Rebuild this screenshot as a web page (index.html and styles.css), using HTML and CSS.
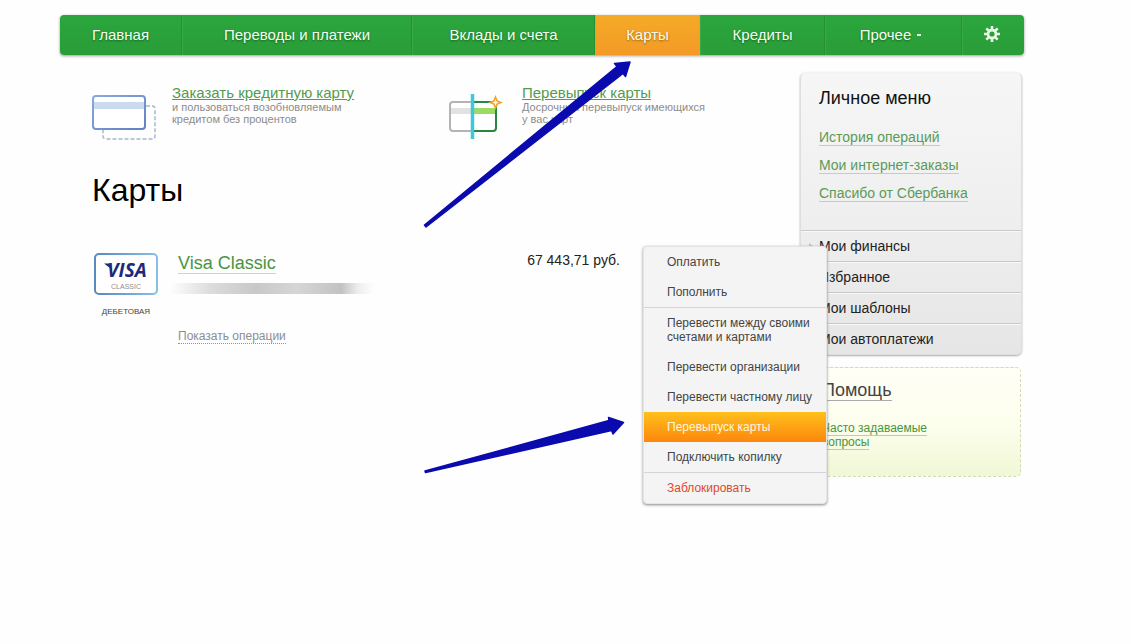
FILE: index.html
```
<!DOCTYPE html>
<html lang="ru">
<head>
<meta charset="utf-8">
<meta name="viewport" content="width=device-width, initial-scale=1">
<title>Карты</title>
<link rel="stylesheet" href="styles.css">
</head>
<body>
<div class="page">
  <nav class="nav" aria-label="Главное меню">
    <a class="nav-item nav-home" href="#">Главная</a>
    <a class="nav-item" href="#">Переводы и платежи</a>
    <a class="nav-item" href="#">Вклады и счета</a>
    <a class="nav-item nav-cards" href="#" aria-current="page">Карты</a>
    <a class="nav-item" href="#">Кредиты</a>
    <a class="nav-item nav-more" href="#">Прочее <span class="nav-dot"></span></a>
    <a class="nav-item nav-settings" href="#" aria-label="Настройки">
      <svg class="gear" viewBox="0 0 16 16" width="16" height="16" aria-hidden="true">
        <g stroke="#e8f7e6" stroke-width="2.6">
          <path d="M8 0v4M8 12v4M0 8h4M12 8h4M2.3 2.3l2.9 2.9M10.8 10.8l2.9 2.9M2.3 13.7l2.9-2.9M10.8 5.2l2.9-2.9"/>
        </g>
        <circle cx="8" cy="8" r="4" fill="none" stroke="#e8f7e6" stroke-width="2.8"/>
      </svg>
    </a>
  </nav>

  <div class="columns">
    <main class="main">
      <div class="promos">
        <section class="promo">
          <svg class="promo-icon promo-icon-order" viewBox="0 0 66 48" width="66" height="48" aria-hidden="true">
            <defs>
              <linearGradient id="edge" x1="0" y1="0" x2="1" y2="1">
                <stop offset="0" stop-color="#8aa9dc"/><stop offset="1" stop-color="#5f83bd"/>
              </linearGradient>
            </defs>
            <path d="M54 13h6q3 0 3 3v27q0 3-3 3H14q-3 0-3-3v-7" fill="none" stroke="#a9b7ca" stroke-width="1.5" stroke-dasharray="4 2"/>
            <rect x="1" y="3" width="52" height="33" rx="3" fill="#fff" stroke="url(#edge)" stroke-width="2"/>
            <path d="M2 9h50v7H2z" fill="#cbdaee"/>
          </svg>
          <div class="promo-text">
            <a class="promo-link" href="#">Заказать кредитную карту</a>
            <p class="promo-note">и пользоваться возобновляемым<br>кредитом без процентов</p>
          </div>
        </section>
        <section class="promo">
          <svg class="promo-icon promo-icon-reissue" viewBox="0 0 54 48" width="54" height="48" aria-hidden="true">
            <path d="M22 9H4Q1 9 1 12v23q0 3 3 3h18" fill="#fff" stroke="#b4b4b4" stroke-width="2"/>
            <path d="M2 15h20v6H2z" fill="#e2e2e2"/>
            <path d="M24 9h20q3 0 3 3v23q0 3-3 3H24" fill="#fff" stroke="#26873f" stroke-width="2"/>
            <path d="M25 15h21v6H25z" fill="#9cdb62"/>
            <path d="M23.500 1v45" stroke="#3ec8dc" stroke-width="3.500"/>
            <path d="M46.500 4l1.600 3.900 3.900 1.600-3.900 1.600-1.600 3.900-1.600-3.900-3.900-1.600 3.900-1.600z" fill="#fff4d2" stroke="#f0a12c" stroke-width="1.500"/>
          </svg>
          <div class="promo-text">
            <a class="promo-link" href="#">Перевыпуск карты</a>
            <p class="promo-note">Досрочный перевыпуск имеющихся<br>у вас карт</p>
          </div>
        </section>
      </div>

      <h1 class="title">Карты</h1>

      <section class="card-row">
        <div class="card-pic">
          <svg class="card-logo" viewBox="0 0 64 42" width="64" height="42" role="img" aria-label="Visa Classic">
            <defs>
              <linearGradient id="frame" x1="0" y1="0" x2="1" y2="0">
                <stop offset="0" stop-color="#5988bd"/><stop offset="1" stop-color="#86bfe6"/>
              </linearGradient>
            </defs>
            <rect x="1" y="1" width="62" height="40" rx="4" fill="#fff" stroke="url(#frame)" stroke-width="2"/>
            <text class="visa-word" x="33" y="24" text-anchor="middle">VISA</text>
            <path d="M10 10.500h5l3 6z" fill="#1a2a7c"/>
            <text class="visa-kind" x="32" y="36" text-anchor="middle">CLASSIC</text>
          </svg>
          <span class="card-type">ДЕБЕТОВАЯ</span>
        </div>
        <div class="card-info">
          <a class="card-name" href="#">Visa Classic</a>
          <div class="card-number"></div>
          <a class="card-history" href="#">Показать операции</a>
        </div>
        <div class="card-sum">67 443,71 руб.</div>
        <div class="menu" role="menu">
          <button class="menu-item" type="button" role="menuitem">Оплатить</button>
          <button class="menu-item" type="button" role="menuitem">Пополнить</button>
          <button class="menu-item menu-split" type="button" role="menuitem">Перевести между своими<br>счетами и картами</button>
          <button class="menu-item" type="button" role="menuitem">Перевести организации</button>
          <button class="menu-item" type="button" role="menuitem">Перевести частному лицу</button>
          <button class="menu-item menu-active" type="button" role="menuitem">Перевыпуск карты</button>
          <button class="menu-item" type="button" role="menuitem">Подключить копилку</button>
          <button class="menu-item menu-split menu-block" type="button" role="menuitem">Заблокировать</button>
        </div>
      </section>
    </main>

    <aside class="side">
      <section class="personal">
        <div class="personal-top">
          <h2 class="personal-title">Личное меню</h2>
          <ul class="personal-links">
            <li><a class="side-link" href="#">История операций</a></li>
            <li><a class="side-link" href="#">Мои интернет-заказы</a></li>
            <li><a class="side-link" href="#">Спасибо от Сбербанка</a></li>
          </ul>
        </div>
        <a class="section-link" href="#"><svg class="section-mark" viewBox="0 0 4 6" width="4" height="6" aria-hidden="true"><path d="M0 0l4 3-4 3z" fill="#c4c4c4"/></svg>Мои финансы</a>
        <a class="section-link" href="#">Избранное</a>
        <a class="section-link" href="#">Мои шаблоны</a>
        <a class="section-link" href="#">Мои автоплатежи</a>
      </section>
      <section class="help">
        <a class="help-title" href="#">Помощь</a>
        <p class="help-text"><a class="help-link" href="#">Часто задаваемые<br>вопросы</a></p>
      </section>
    </aside>
  </div>

  <svg class="arrows" viewBox="0 0 640 480" width="640" height="480" aria-hidden="true">
    <g fill="#0a0aae" stroke="#0a0aae" stroke-linejoin="round">
      <path d="M424.500 225L617 66.500 614.500 63.500 630 62 625.500 76.500 623 73.500 426 227z" stroke-width="1.500"/>
      <path d="M425 471L609 420.500 608.500 417.500 623.500 422.500 613 434 611.500 430.500 425.500 472.500z" stroke-width="1.500"/>
    </g>
  </svg>
</div>
</body>
</html>
```
FILE: styles.css
```
* {
  box-sizing: border-box;
}

body {
  margin: 0;
  background: #fefefe;
  color: #222;
  font-family: "Liberation Sans", Arial, sans-serif;
}

a {
  color: inherit;
  text-decoration: none;
}

h1, h2, p, ul {
  margin: 0;
  padding: 0;
  font-weight: normal;
}

.page {
  position: relative;
  padding: 15px 106px 40px 60px;
}

/* Top navigation */
.nav {
  display: grid;
  grid-template-columns: 122fr 230fr 183fr 105fr 125fr 137fr 62fr;
  height: 40px;
  border-radius: 4px;
  overflow: hidden;
  background: linear-gradient(#2ba63d, #2a9d38);
  box-shadow: 0 1px 3px #999;
}

.nav-item {
  display: flex;
  align-items: center;
  justify-content: center;
  gap: 6px;
  padding-bottom: 2px;
  border-left: 1px solid #38ab48;
  border-right: 1px solid #24902f;
  color: #f4fff2;
  font-size: 15px;
  line-height: 17px;
  white-space: nowrap;
  text-shadow: 0 1px 2px #14641e;
}

.nav-home {
  border-left: 0;
}

.nav-cards {
  border-color: #f0a028;
  background: linear-gradient(#f5aa28, #f39a26);
  text-shadow: 0 1px 2px #a06010;
}

.nav-more {
  padding-right: 6px;
}

.nav-settings {
  padding-right: 4px;
  border-right: 0;
}

.nav-dot {
  width: 4px;
  height: 2px;
  margin-top: 2px;
  background: #e8f7e6;
}

/* Page columns */
.columns {
  display: flex;
  padding-top: 17px;
}

.main {
  flex: 1;
  padding-left: 32px;
}

.promos {
  display: grid;
  grid-template-columns: 357px 1fr;
  padding-top: 12px;
}

.promo {
  display: flex;
}

.promo-icon {
  flex: none;
  margin-top: 9px;
}

.promo-icon-order { margin-right: 14px; }
.promo-icon-reissue { margin-right: 19px; }

.promo-link {
  display: block;
  color: #549c4c;
  font-size: 15px;
  line-height: 17px;
  text-decoration: underline;
  white-space: nowrap;
}

.promo-note {
  color: #8c8c8c;
  font-size: 11px;
  line-height: 12px;
  white-space: nowrap;
}

.title {
  margin-top: 31px;
  color: #000;
  font-size: 32px;
  line-height: 36px;
}

/* Card */
.card-row {
  position: relative;
  display: flex;
  margin-top: 42px;
}

.card-pic {
  display: flex;
  flex-direction: column;
  align-items: center;
  gap: 12px;
  padding: 3px 0 0 2px;
}

.visa-word {
  font: italic bold 19px "Open Sans", sans-serif;
  fill: #1a2a7c;
}

.visa-kind {
  font: 7px "Liberation Sans", Arial, sans-serif;
  fill: #8c8c8c;
}

.card-type {
  color: #444;
  font-size: 8px;
  line-height: 10px;
}

.card-info {
  flex: 1;
  display: flex;
  flex-direction: column;
  align-items: flex-start;
  padding: 4px 0 0 20px;
}

.card-name {
  border-bottom: 1px solid #c8d8c6;
  color: #499442;
  font-size: 18px;
  line-height: 19px;
}

.card-number {
  width: 204px;
  height: 11px;
  margin: 9px 0 0 -8px;
  background: linear-gradient(90deg, transparent, #dcdcdc 20%, #c8c8c8 42%, #d6d6d6 62%, #c2c2c2 84%, #ededed 92%, transparent);
}

.card-history {
  margin-top: 35px;
  border-bottom: 1px dotted #7f9aa4;
  color: #8a8f92;
  font-size: 12px;
  line-height: 14px;
}

.card-sum {
  padding: 2px 180px 0 0;
  color: #222;
  font-size: 14px;
  line-height: 17px;
}

.menu {
  position: absolute;
  z-index: 2;
  top: -4px;
  right: -27px;
  width: 184px;
  overflow: hidden;
  border: 1px solid #e4e4e4;
  border-radius: 4px;
  background: #f4f4f4;
  box-shadow: 0 1px 3px #888;
}

.menu-item {
  display: block;
  width: 100%;
  padding: 8px 0 8px 23px;
  border: 0;
  background: none;
  color: #444;
  font: 12px/14px "Liberation Sans", Arial, sans-serif;
  text-align: left;
  white-space: nowrap;
}

.menu-split {
  border-top: 1px solid #d4d4d4;
}

.menu-active {
  background: linear-gradient(#ffc01c, #fd870c);
  color: #fff6dc;
}

.menu-block {
  color: #dc4a2c;
}

/* Right column */
.side {
  flex: none;
  width: 222px;
  margin-right: 2px;
}

.personal {
  border: 1px solid #dedede;
  border-top-color: #f2f2f2;
  border-radius: 6px;
  background: linear-gradient(#f6f6f6, #efefef 50%, #e6e6e6);
  box-shadow: 0 1px 2px #aaa;
}

.personal-top {
  padding: 15px 18px 28px;
}

.personal-title {
  color: #111;
  font-size: 18px;
  line-height: 20px;
}

.personal-links {
  display: grid;
  gap: 11px;
  margin-top: 21px;
  list-style: none;
  font-size: 14px;
  line-height: 16px;
}

.personal-links li {
  display: flex;
}

.side-link {
  border-bottom: 1px solid #bcd3b9;
  color: #5c9a58;
}

.section-link {
  position: relative;
  display: block;
  padding: 7px 18px;
  border-top: 1px solid #c9c9c9;
  box-shadow: inset 0 1px #f8f8f8;
  color: #222;
  font-size: 14px;
  line-height: 16px;
}

.section-mark {
  position: absolute;
  top: 12px;
  left: 8px;
}

.help {
  margin: 12px 1px 0 0;
  padding: 13px 21px 27px;
  border: 1px dashed #d3dbb6;
  border-radius: 5px;
  background: linear-gradient(#fffff6, #fdffee 50%, #f0f7d6);
}

.help-title {
  display: inline-block;
  border-bottom: 1px solid #aaa;
  color: #444;
  font-size: 18px;
  line-height: 19px;
}

.help-text {
  margin-top: 20px;
  font-size: 12px;
  line-height: 14px;
}

.help-link {
  border-bottom: 1px solid #b4d2ae;
  color: #499442;
}

/* Pointers laid over the page */
.arrows {
  position: absolute;
  z-index: 3;
  top: 0;
  left: 0;
  pointer-events: none;
}
```
